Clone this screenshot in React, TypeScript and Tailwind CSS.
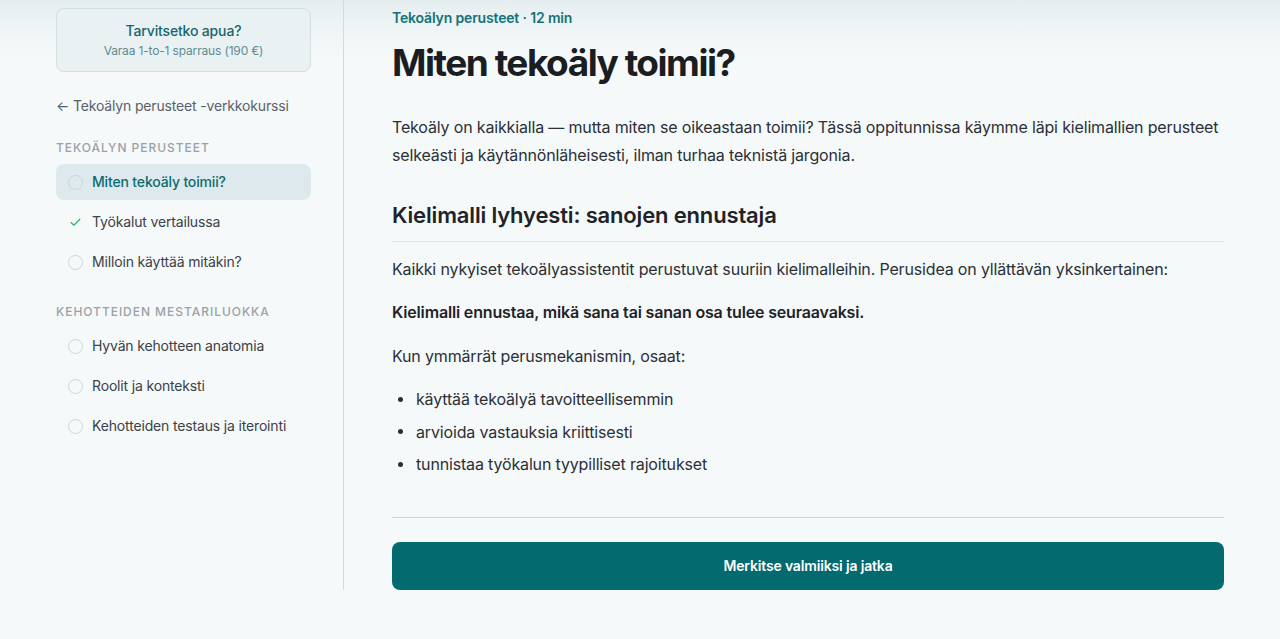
import { Check } from "lucide-react";

const groups = [
  {
    title: "Tekoälyn perusteet",
    items: [
      { label: "Miten tekoäly toimii?", active: true },
      { label: "Työkalut vertailussa", done: true },
      { label: "Milloin käyttää mitäkin?" },
    ],
  },
  {
    title: "Kehotteiden mestariluokka",
    items: [
      { label: "Hyvän kehotteen anatomia" },
      { label: "Roolit ja konteksti" },
      { label: "Kehotteiden testaus ja iterointi" },
    ],
  },
];

function LessonItem({ label, active, done }: { label: string; active?: boolean; done?: boolean }) {
  return (
    <div
      className={`flex items-center gap-[9px] h-9 px-3 rounded-lg text-sm ${
        active ? "bg-[#dde9ec] text-[#0d6b70] font-medium" : "text-[#3b4148]"
      }`}
    >
      {done ? (
        <span className="w-[15px] flex justify-center">
          <Check size={13} strokeWidth={2.2} className="text-[#2fb36b]" />
        </span>
      ) : (
        <span className="w-[15px] h-[15px] rounded-full border-[1.5px] border-[#cdd4d8] bg-transparent" />
      )}
      <span>{label}</span>
    </div>
  );
}

export default function App() {
  return (
    <div
      className="min-h-[639px] bg-[linear-gradient(to_bottom,#e4edef_0px,#eef4f5_25px,#f5f9fa_60px,#f5f9fa)] text-[#1f2328] tracking-[-0.01em]"
      style={{ fontFamily: "Inter, 'Noto Sans', sans-serif" }}
    >
      <div className="flex pb-[49px]">
        {/* sidebar */}
        <aside className="w-[344px] shrink-0 pl-14 pr-8 pt-2 border-r border-[#d5dadd]">
          <div className="h-16 rounded-lg border border-[#cfdfe2] bg-[#e9f1f3] flex flex-col items-center justify-center">
            <div className="text-sm font-medium text-[#17666b] leading-5">Tarvitsetko apua?</div>
            <div className="text-xs text-[#5e8c90] leading-4 mt-[2px]">Varaa 1-to-1 sparraus (190 €)</div>
          </div>

          <div className="mt-[24px] text-sm text-[#5b6168] leading-5">← Tekoälyn perusteet -verkkokurssi</div>

          {groups.map((g) => (
            <div key={g.title} className="mt-[24px]">
              <div className="text-xs uppercase tracking-[0.08em] text-[#9ba1a6] font-medium leading-4">{g.title}</div>
              <div className="mt-[8px] flex flex-col gap-1">
                {g.items.map((it) => (
                  <LessonItem key={it.label} {...it} />
                ))}
              </div>
            </div>
          ))}
        </aside>

        {/* main */}
        <main className="flex-1 pl-12 pr-14">
          <div className="w-[832px]">
            <div className="pt-[8px] text-sm font-semibold text-[#137279] leading-5">Tekoälyn perusteet · 12 min</div>
            <h1 className="mt-[13px] text-[37px] leading-[44px] font-bold tracking-[-0.04em] text-[#1a1d21]">
              Miten tekoäly toimii?
            </h1>

            <p className="mt-[28px] text-base leading-7 text-[#2b3036]">
              Tekoäly on kaikkialla — mutta miten se oikeastaan toimii? Tässä oppitunnissa käymme läpi kielimallien perusteet
              selkeästi ja käytännönläheisesti, ilman turhaa teknistä jargonia.
            </p>

            <h2 className="mt-[32px] text-[22px] leading-7 font-semibold text-[#1f2328] pb-[12px] border-b border-[#dfeaee]">
              Kielimalli lyhyesti: sanojen ennustaja
            </h2>

            <p className="mt-[13px] text-base leading-7 text-[#2b3036]">
              Kaikki nykyiset tekoälyassistentit perustuvat suuriin kielimalleihin. Perusidea on yllättävän yksinkertainen:
            </p>
            <p className="mt-[15px] text-base leading-7 font-semibold text-[#1f2328]">
              Kielimalli ennustaa, mikä sana tai sanan osa tulee seuraavaksi.
            </p>
            <p className="mt-[16px] text-base leading-7 text-[#2b3036]">Kun ymmärrät perusmekanismin, osaat:</p>

            <ul className="mt-[15px] flex flex-col gap-[4.5px] text-base leading-7 text-[#2b3036]">
              {[
                "käyttää tekoälyä tavoitteellisemmin",
                "arvioida vastauksia kriittisesti",
                "tunnistaa työkalun tyypilliset rajoitukset",
              ].map((t) => (
                <li key={t} className="flex items-center">
                  <span className="w-6 flex justify-start pl-[6px]">
                    <span className="w-[5px] h-[5px] rounded-full bg-[#2b3036]" />
                  </span>
                  {t}
                </li>
              ))}
            </ul>

            <div className="mt-[39px] border-t border-[#cdd3d6]" />

            <button className="mt-6 w-full h-12 rounded-lg bg-[#036a70] text-white text-sm font-semibold">
              Merkitse valmiiksi ja jatka
            </button>
          </div>
        </main>
      </div>
    </div>
  );
}
